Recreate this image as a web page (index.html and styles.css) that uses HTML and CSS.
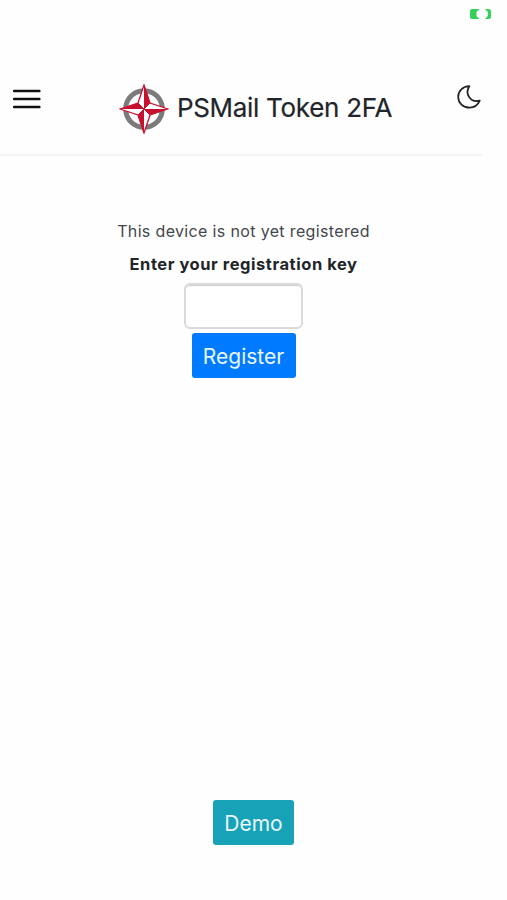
FILE: index.html
```html
<!DOCTYPE html>
<html lang="en">
  <head>
    <meta charset="UTF-8" />
    <meta name="viewport" content="width=device-width, initial-scale=1.0" />
    <title>PSMail Token 2FA</title>
    <link rel="stylesheet" href="styles.css">
  </head>
  <body>
    <div class="statusbar">
      <svg class="battery" width="22" height="10" viewBox="0 0 22 10">
        <path d="M2 0h7.500L6.500 3v4L9.500 10H2Q0 10 0 8V2Q0 0 2 0Z" fill="#34d058" />
        <path d="M15 0h3.500Q21 0 21 2.500v5Q21 10 18.500 10H15L17.800 7V3Z" fill="#34d058" />
      </svg>
    </div>
    <header class="header">
      <svg class="menu" width="28" height="20" viewBox="0 0 28 20">
        <path d="M1 2h25.400M1 10h25.400M1 18h25.400" stroke="#111" stroke-width="2.500" stroke-linecap="round" />
      </svg>
      <div class="brand">
        <svg class="logo" width="50" height="50" viewBox="0 0 50 50">
          <circle cx="25" cy="25" r="18.300" fill="none" stroke="#7b7b7b" stroke-width="5" />
          <path d="M25 1L31 19L49 25L31 31L25 49L19 31L1 25L19 19Z" fill="#fff" stroke="#c8102e" stroke-width="1.300" />
          <path d="M25 1V25L31 19ZM49 25H25L31 31ZM25 49V25L19 31ZM1 25H25L19 19Z" fill="#c8102e" />
          <path d="M19 19L31 31M31 19L19 31" stroke="#c8102e" stroke-width="1" />
        </svg>
        <h1 class="title">PSMail Token 2FA</h1>
      </div>
      <svg class="moon" width="24" height="24" viewBox="0 0 24 24">
        <path d="M12.300 1.200C7.400 9 13.500 18 22.800 15.700C20.800 20.200 17.300 22.700 12.700 22.700C6.200 22.700 1.200 18 1.200 11.900C1.200 6 5.800 1.400 12.300 1.200Z" fill="none" stroke="#222" stroke-width="1.700" stroke-linejoin="round" />
      </svg>
    </header>
    <main class="content">
      <p class="message">This device is not yet registered</p>
      <label class="label" for="regkey">Enter your registration key</label>
      <input class="key" id="regkey" type="text">
      <button class="btn register">Register</button>
      <button class="btn demo">Demo</button>
    </main>
  </body>
</html>
```

FILE: styles.css
```css
* {
  box-sizing: border-box;
  margin: 0;
  padding: 0;
}

body {
  height: 900px;
  display: flex;
  flex-direction: column;
  background-color: #fefefe;
  font-family: Inter, "Liberation Sans", sans-serif;
  color: #212529;
  overflow: hidden;
}

svg {
  display: block;
}

.statusbar {
  height: 28px;
  padding: 9px 15px 0 0;
  display: flex;
  justify-content: flex-end;
}

/* HEADER */
.header {
  width: 483px;
  height: 128px;
  padding: 56px 2px 0 13px;
  display: flex;
  justify-content: space-between;
  border-bottom: 2px solid #f4f4f4;
}

.menu {
  margin-top: 5px;
}

.brand {
  display: flex;
  gap: 8px;
  height: 50px;
  margin-left: 13px;
}

.title {
  font-size: 26px;
  font-weight: 400;
  line-height: 48px;
  letter-spacing: -0.3px;
  white-space: nowrap;
  -webkit-text-stroke: 0.2px #212529;
}

.moon {
  margin-top: 1px;
}

/* CONTENT */
.content {
  width: 487px;
  flex: 1;
  display: flex;
  flex-direction: column;
  align-items: center;
  padding: 63px 0 55px;
}

.message,
.label {
  line-height: 24px;
  font-size: 16px;
}

.message {
  color: #43474a;
  letter-spacing: 0.35px;
  margin-bottom: 9px;
}

.label {
  font-size: 16.5px;
  font-weight: 700;
  letter-spacing: 0.55px;
}

.key {
  width: 119px;
  height: 46px;
  margin-top: 7px;
  padding: 8px;
  border: 2px solid #dadada;
  border-radius: 6px;
  background-color: #fff;
  box-shadow: inset 0 2px 1px -1px #ccc;
  font-size: 20px;
}

.btn {
  height: 45px;
  padding-top: 2px;
  border: 0;
  border-radius: 3px;
  color: #e9f7ff;
  font-family: inherit;
  font-size: 21px;
}

.register {
  width: 104px;
  margin-top: 4px;
  background-color: #007bff;
}

.demo {
  width: 81px;
  margin-top: auto;
  margin-left: 20px;
  background-color: #17a2b8;
}
```
